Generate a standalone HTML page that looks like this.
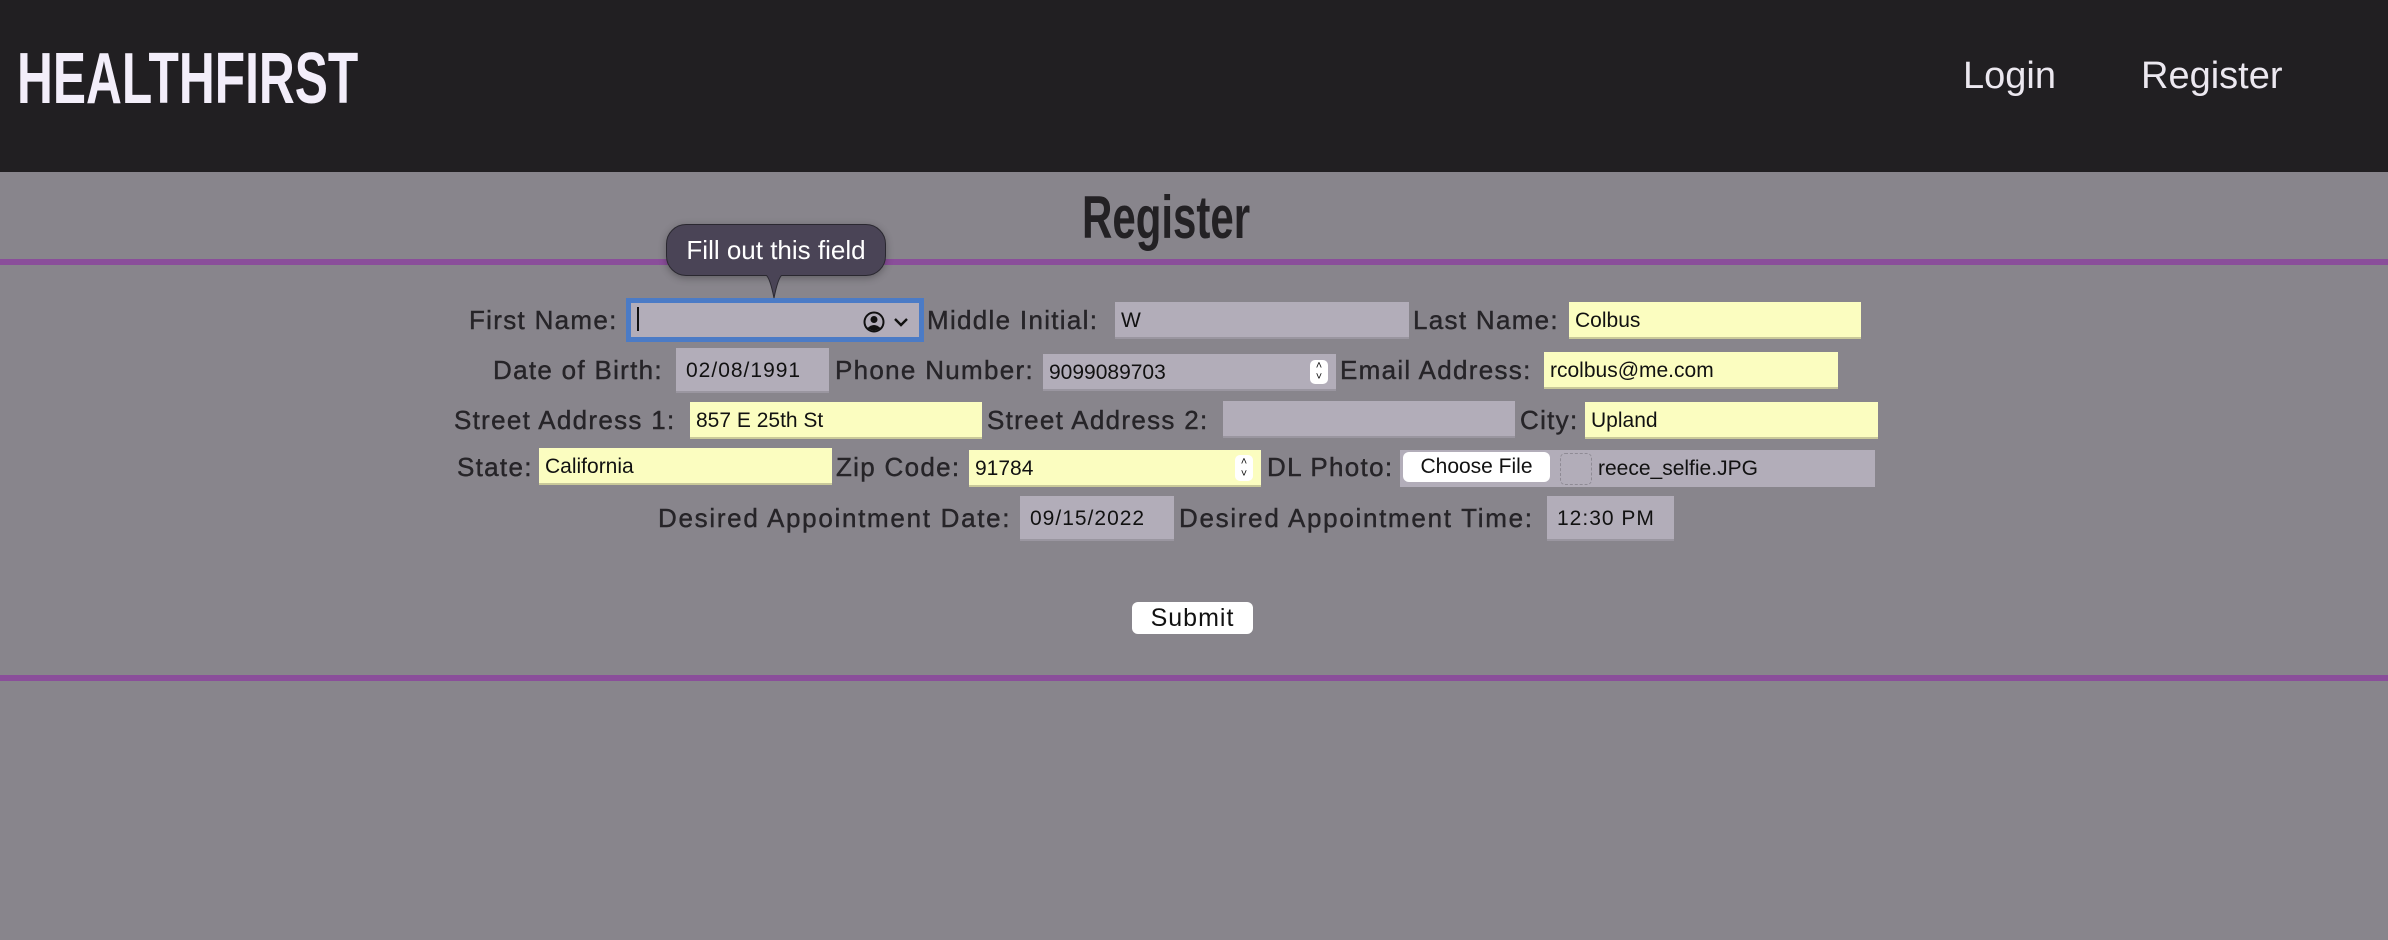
<!DOCTYPE html>
<html><head><meta charset="utf-8"><style>
*{margin:0;padding:0;box-sizing:border-box}
body{width:2388px;height:940px;background:#88858c;position:relative;overflow:hidden;font-family:"Liberation Sans",sans-serif}
.hdr{position:absolute;left:0;top:0;width:2388px;height:172px;background:#211f22}
.logo{position:absolute;left:17px;top:37px;font-size:72px;font-weight:bold;color:#f3eefa;transform:scaleX(0.69);transform-origin:left top;line-height:84px;white-space:nowrap}
.nav{position:absolute;top:54px;font-size:38px;color:#ece8f0;line-height:44px}
.title{position:absolute;left:0;width:2333px;text-align:center;top:185px;font-size:60px;font-weight:bold;color:#232124;line-height:66px}
.title span{display:inline-block;transform:scaleX(0.7)}
.line{position:absolute;left:0;width:2388px;height:6px;background:#8a4e9a}
.l{position:absolute;font-size:26px;letter-spacing:1.3px;color:#262428;white-space:nowrap;line-height:30px;-webkit-text-stroke:0.4px #262428}
.i{position:absolute;height:37px;background:#b2adb9;border-bottom:2px solid #9a96a0;font-size:21px;color:#111;line-height:37px;padding-left:6px;white-space:nowrap}
.y{background:#fbfdc0;border-bottom-color:#c9c99a}
</style></head><body>
<div class="hdr">
<div class="logo">HEALTHFIRST</div>
<div class="nav" style="left:1963px">Login</div>
<div class="nav" style="left:2141px">Register</div>
</div>
<div class="title"><span>Register</span></div>
<div class="line" style="top:259px"></div>
<div class="line" style="top:675px"></div>

<div class="l" style="left:469px;top:305px">First Name:</div>
<div class="i" style="left:626px;top:298px;width:298px;height:44px;border:5px solid #4b7bc6;background:#b2adb9;line-height:32px"><span style="display:inline-block;width:2px;height:24px;background:#111;vertical-align:middle"></span>
<svg style="position:absolute;right:34px;top:8px" width="22" height="22" viewBox="0 0 22 22"><circle cx="11" cy="11" r="9.5" fill="none" stroke="#111" stroke-width="2"/><circle cx="11" cy="8.5" r="3.5" fill="#111"/><path d="M4.5 17 Q11 11 17.5 17 Q11 22 4.5 17Z" fill="#111"/></svg>
<svg style="position:absolute;right:10px;top:13px" width="16" height="12" viewBox="0 0 16 12"><path d="M2 3 L8 9 L14 3" fill="none" stroke="#111" stroke-width="2.4"/></svg></div>
<div class="l" style="left:927px;top:305px">Middle Initial:</div>
<div class="i" style="left:1115px;top:302px;width:294px">W</div>
<div class="l" style="left:1413px;top:305px">Last Name:</div>
<div class="i y" style="left:1569px;top:302px;width:292px">Colbus</div>

<div class="l" style="left:493px;top:355px">Date of Birth:</div>
<div class="i" style="left:676px;top:348px;width:153px;height:45px;line-height:45px;padding-left:10px;letter-spacing:1px">02/08/1991</div>
<div class="l" style="left:835px;top:355px">Phone Number:</div>
<div class="i" style="left:1043px;top:354px;width:293px">9099089703<span style="position:absolute;right:8px;top:6px;width:18px;height:24px;background:#fff;border-radius:5px;font-size:11px;line-height:11px;text-align:center;padding-top:1px">˄<br>˅</span></div>
<div class="l" style="left:1340px;top:355px">Email Address:</div>
<div class="i y" style="left:1544px;top:352px;width:294px">rcolbus@me.com</div>

<div class="l" style="left:454px;top:405px">Street Address 1:</div>
<div class="i y" style="left:690px;top:402px;width:292px">857 E 25th St</div>
<div class="l" style="left:987px;top:405px">Street Address 2:</div>
<div class="i" style="left:1223px;top:401px;width:292px"></div>
<div class="l" style="left:1520px;top:405px">City:</div>
<div class="i y" style="left:1585px;top:402px;width:293px">Upland</div>

<div class="l" style="left:457px;top:452px">State:</div>
<div class="i y" style="left:539px;top:448px;width:293px">California</div>
<div class="l" style="left:836px;top:452px">Zip Code:</div>
<div class="i y" style="left:969px;top:450px;width:292px">91784<span style="position:absolute;right:8px;top:5px;width:18px;height:26px;background:#fff;border-radius:5px;font-size:11px;line-height:12px;text-align:center;padding-top:1px">˄<br>˅</span></div>
<div class="l" style="left:1267px;top:452px">DL Photo:</div>
<div class="i" style="left:1400px;top:450px;width:475px;border:none;padding:0">
<span style="position:absolute;left:3px;top:2px;width:147px;height:30px;background:#fff;border-radius:6px;font-size:21px;line-height:30px;text-align:center">Choose File</span>
<span style="position:absolute;left:160px;top:3px;width:32px;height:32px;border:1px dashed #8f8b95;border-radius:5px"></span>
<span style="position:absolute;left:198px;top:0;font-size:21px">reece_selfie.JPG</span></div>

<div class="l" style="left:658px;top:503px;letter-spacing:1.7px">Desired Appointment Date:</div>
<div class="i" style="left:1020px;top:496px;width:154px;height:45px;line-height:45px;padding-left:10px;letter-spacing:1px">09/15/2022</div>
<div class="l" style="left:1179px;top:503px;letter-spacing:1.7px">Desired Appointment Time:</div>
<div class="i" style="left:1547px;top:496px;width:127px;height:45px;line-height:45px;padding-left:10px;letter-spacing:1px">12:30 PM</div>

<div style="position:absolute;left:1132px;top:602px;width:121px;height:32px;background:#fff;border-radius:6px;font-size:25px;line-height:32px;text-align:center;letter-spacing:1px;color:#111">Submit</div>

<div style="position:absolute;left:666px;top:224px;width:220px;height:52px;background:#4a4456;border:1px solid #2a2830;border-radius:20px;color:#fff;font-size:26px;line-height:50px;text-align:center;box-shadow:0 2px 8px rgba(0,0,0,.3)">Fill out this field</div>
<svg style="position:absolute;left:748px;top:274px" width="52" height="26" viewBox="0 0 52 26"><path d="M0 1 L18 1 Q22 4 26 24 Q30 4 34 1 L52 1" fill="#4a4456" stroke="#2a2830" stroke-width="1"/><rect x="0" y="-2" width="52" height="3" fill="#4a4456"/></svg>
</body></html>
